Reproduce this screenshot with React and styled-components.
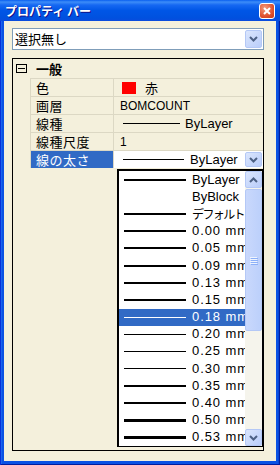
import styled, { createGlobalStyle } from "styled-components";

const jp = `"Noto Sans CJK JP", "Liberation Sans", sans-serif`;
const latin = `"Liberation Sans", "Noto Sans CJK JP", sans-serif`;

const GlobalStyle = createGlobalStyle`
  html, body {
    margin: 0;
    padding: 0;
    background: #0a4bde;
  }
  body {
    font-family: ${latin};
  }
`;

const Window = styled.div`
  width: 280px;
  height: 465px;
  box-sizing: border-box;
  display: flex;
  flex-direction: column;
  background: #0b52e4;
  box-shadow: inset 1px 0 #0831d9, inset -1px 0 #001ea0, inset 0 -1px #001ea0,
    inset 2px 0 #1a64ee, inset -2px 0 #0a46d2;
`;

const TitleBar = styled.div`
  height: 21px;
  flex: none;
  display: flex;
  align-items: center;
  justify-content: space-between;
  padding: 0 5px 0 5px;
  background: linear-gradient(
    #0a5fef,
    #3d8df8 2px,
    #1668f2 5px,
    #0056e6 50%,
    #0051df 85%,
    #0a4bde
  );
`;

const Title = styled.span`
  font-family: ${jp};
  font-size: 12px;
  font-weight: bold;
  line-height: 14px;
  color: #fff;
  text-shadow: 1px 1px #0f1089;
`;

const CloseButton = styled.div`
  width: 14px;
  height: 14px;
  border: 1px solid #fff;
  border-radius: 3px;
  background: radial-gradient(circle at 35% 30%, #f19a7c, #e0522f 60%, #c43a18);
  display: flex;
  align-items: center;
  justify-content: center;
`;

const Body = styled.div`
  flex: 1;
  margin: 0 4px 4px 4px;
  padding: 7px 12px 10px 8px;
  background: #f4f0dc;
  display: flex;
  flex-direction: column;
  min-height: 0;
`;

const Combo = styled.div`
  height: 22px;
  box-sizing: border-box;
  flex: none;
  display: flex;
  align-items: stretch;
  border: 1px solid #7f9db9;
  background: #fff;
`;

const ComboText = styled.span`
  flex: 1;
  font-family: ${jp};
  font-size: 13px;
  line-height: 20px;
  padding-left: 2px;
  color: #000;
`;

const ArrowButton = styled.div`
  width: ${(p) => p.$w || 17}px;
  height: ${(p) => (p.$h ? `${p.$h}px` : "auto")};
  box-sizing: border-box;
  margin: ${(p) => p.$m || "0"};
  border: 1px solid #b4c8f6;
  border-radius: 2px;
  background: linear-gradient(135deg, #dbe6fd, #b9cdfa);
  display: flex;
  align-items: center;
  justify-content: center;
  flex: none;
`;

const Grid = styled.div`
  margin-top: 8px;
  flex: 1;
  position: relative;
  border: 1px solid #000;
  background: #f4f0dc;
`;

const GroupRow = styled.div`
  height: 19px;
  display: flex;
  align-items: center;
  padding-left: 3px;
`;

const Expander = styled.div`
  width: 11px;
  height: 9px;
  box-sizing: border-box;
  border: 1px solid #000;
  position: relative;
  margin-right: 9px;
  &::after {
    content: "";
    position: absolute;
    left: 1px;
    right: 1px;
    top: 3px;
    height: 1px;
    background: #000;
  }
`;

const GroupLabel = styled.span`
  font-family: ${jp};
  font-size: 13px;
  font-weight: bold;
  line-height: 16px;
  color: #000;
`;

const PropRow = styled.div`
  display: grid;
  grid-template-columns: 17px 84px 1fr;
  height: 18px;
`;

const Gutter = styled.div``;

const Label = styled.div`
  border-top: 1px solid #dcd8c4;
  border-left: 1px solid #dcd8c4;
  border-right: 1px solid #dcd8c4;
  padding-left: 5px;
  font-family: ${jp};
  font-size: 13px;
  line-height: 17px;
  letter-spacing: 0.5px;
  white-space: nowrap;
  overflow: hidden;
  background: ${(p) => (p.$selected ? "#316ac5" : "transparent")};
  color: ${(p) => (p.$selected ? "#fff" : "#000")};
`;

const Value = styled.div`
  border-top: 1px solid #dcd8c4;
  display: flex;
  align-items: center;
  padding-left: 6px;
  font-family: ${latin};
  font-size: 12px;
  color: #000;
  white-space: nowrap;
  overflow: hidden;
  background: ${(p) => (p.$white ? "#fff" : "transparent")};
`;

const ColorSwatch = styled.span`
  width: 14px;
  height: 12px;
  margin-left: 2px;
  margin-right: 9px;
  background: #ff0000;
  flex: none;
`;

const JpText = styled.span`
  font-family: ${jp};
  font-size: 13px;
  line-height: 16px;
`;

const Line = styled.span`
  width: ${(p) => p.$w}px;
  height: ${(p) => p.$h}px;
  margin-left: ${(p) => p.$ml || 0}px;
  margin-right: ${(p) => p.$mr || 0}px;
  background: ${(p) => (p.$none ? "transparent" : "currentColor")};
  flex: none;
`;

const LineText = styled.span`
  font-family: ${latin};
  font-size: 13px;
  flex: 1;
`;

const Dropdown = styled.div`
  position: absolute;
  right: 0;
  top: 110px;
  width: 146px;
  height: 278px;
  box-sizing: border-box;
  border: 1px solid #000;
  border-left-width: 2px;
  border-top-width: 2px;
  background: #fff;
  display: flex;
`;

const List = styled.div`
  flex: 1;
  display: grid;
  grid-template-rows: repeat(16, 1fr);
  overflow: hidden;
`;

const Item = styled.div`
  display: flex;
  align-items: center;
  padding-left: 4px;
  white-space: nowrap;
  overflow: hidden;
  background: ${(p) => (p.$selected ? "#316ac5" : "#fff")};
  color: ${(p) => (p.$selected ? "#fff" : "#000")};
`;

const ItemText = styled.span`
  font-family: ${(p) => (p.$jp ? jp : latin)};
  font-size: ${(p) => (p.$jp ? 12 : 13)}px;
  line-height: 16px;
  letter-spacing: ${(p) => (p.$mm ? "0.9px" : p.$jp ? "-1.6px" : "0")};
`;

const ScrollBar = styled.div`
  width: 17px;
  flex: none;
  display: flex;
  flex-direction: column;
  background: #f5f4ec;
`;

const Thumb = styled.div`
  height: 142px;
  margin-top: 1px;
  box-sizing: border-box;
  border: 1px solid #b4c8f6;
  border-radius: 2px;
  background: linear-gradient(90deg, #c9d8fc, #bcd0fb);
  display: flex;
  flex-direction: column;
  align-items: center;
  justify-content: center;
  gap: 1px;
`;

const Grip = styled.span`
  width: 7px;
  height: 1px;
  background: #eef4fe;
  box-shadow: 1px 1px #8cb0f8;
`;

const ScrollSpace = styled.div`
  flex: 1;
`;

const Chevron = ({ up }) => (
  <svg width="9" height="6" viewBox="0 0 9 6">
    <polyline
      points={up ? "1,5 4.5,1.5 8,5" : "1,1 4.5,4.5 8,1"}
      fill="none"
      stroke="#4d6185"
      strokeWidth="2"
    />
  </svg>
);

const items = [
  { text: "ByLayer", h: 2 },
  { text: "ByBlock", h: 0 },
  { text: "デフォルト", h: 2, jp: true },
  { text: "0.00 mm", h: 2, mm: true },
  { text: "0.05 mm", h: 2, mm: true },
  { text: "0.09 mm", h: 2, mm: true },
  { text: "0.13 mm", h: 2, mm: true },
  { text: "0.15 mm", h: 2, mm: true },
  { text: "0.18 mm", h: 1, mm: true, selected: true },
  { text: "0.20 mm", h: 1, mm: true },
  { text: "0.25 mm", h: 1, mm: true },
  { text: "0.30 mm", h: 1, mm: true },
  { text: "0.35 mm", h: 2, mm: true },
  { text: "0.40 mm", h: 2, mm: true },
  { text: "0.50 mm", h: 3, mm: true },
  { text: "0.53 mm", h: 3, mm: true },
];

export default function App() {
  return (
    <>
      <GlobalStyle />
      <Window>
        <TitleBar>
          <Title>プロパティ バー</Title>
          <CloseButton>
            <svg width="8" height="8" viewBox="0 0 8 8">
              <path d="M1 1L7 7M7 1L1 7" stroke="#fff" strokeWidth="2" />
            </svg>
          </CloseButton>
        </TitleBar>
        <Body>
          <Combo>
            <ComboText>選択無し</ComboText>
            <ArrowButton $w={17} $m="1px 1px 1px 0">
              <Chevron />
            </ArrowButton>
          </Combo>
          <Grid>
            <GroupRow>
              <Expander />
              <GroupLabel>一般</GroupLabel>
            </GroupRow>
            <PropRow>
              <Gutter />
              <Label>色</Label>
              <Value>
                <ColorSwatch />
                <JpText>赤</JpText>
              </Value>
            </PropRow>
            <PropRow>
              <Gutter />
              <Label>画層</Label>
              <Value>BOMCOUNT</Value>
            </PropRow>
            <PropRow>
              <Gutter />
              <Label>線種</Label>
              <Value>
                <Line $w={57} $h={1} $ml={3} $mr={5} />
                <LineText>ByLayer</LineText>
              </Value>
            </PropRow>
            <PropRow>
              <Gutter />
              <Label>線種尺度</Label>
              <Value>1</Value>
            </PropRow>
            <PropRow>
              <Gutter />
              <Label $selected>線の太さ</Label>
              <Value $white>
                <Line $w={61} $h={1} $ml={3} $mr={6} />
                <LineText>ByLayer</LineText>
                <ArrowButton $w={17} $h={15} $m="0 1px 0 0">
                  <Chevron />
                </ArrowButton>
              </Value>
            </PropRow>
            <Dropdown>
              <List>
                {items.map((it) => (
                  <Item key={it.text} $selected={it.selected}>
                    <Line $w={62} $h={it.h || 1} $none={!it.h} $ml={1} $mr={6} />
                    <ItemText $jp={it.jp} $mm={it.mm}>
                      {it.text}
                    </ItemText>
                  </Item>
                ))}
              </List>
              <ScrollBar>
                <ArrowButton $w={17} $h={17}>
                  <Chevron up />
                </ArrowButton>
                <Thumb>
                  <Grip />
                  <Grip />
                  <Grip />
                  <Grip />
                </Thumb>
                <ScrollSpace />
                <ArrowButton $w={17} $h={17}>
                  <Chevron />
                </ArrowButton>
              </ScrollBar>
            </Dropdown>
          </Grid>
        </Body>
      </Window>
    </>
  );
}
